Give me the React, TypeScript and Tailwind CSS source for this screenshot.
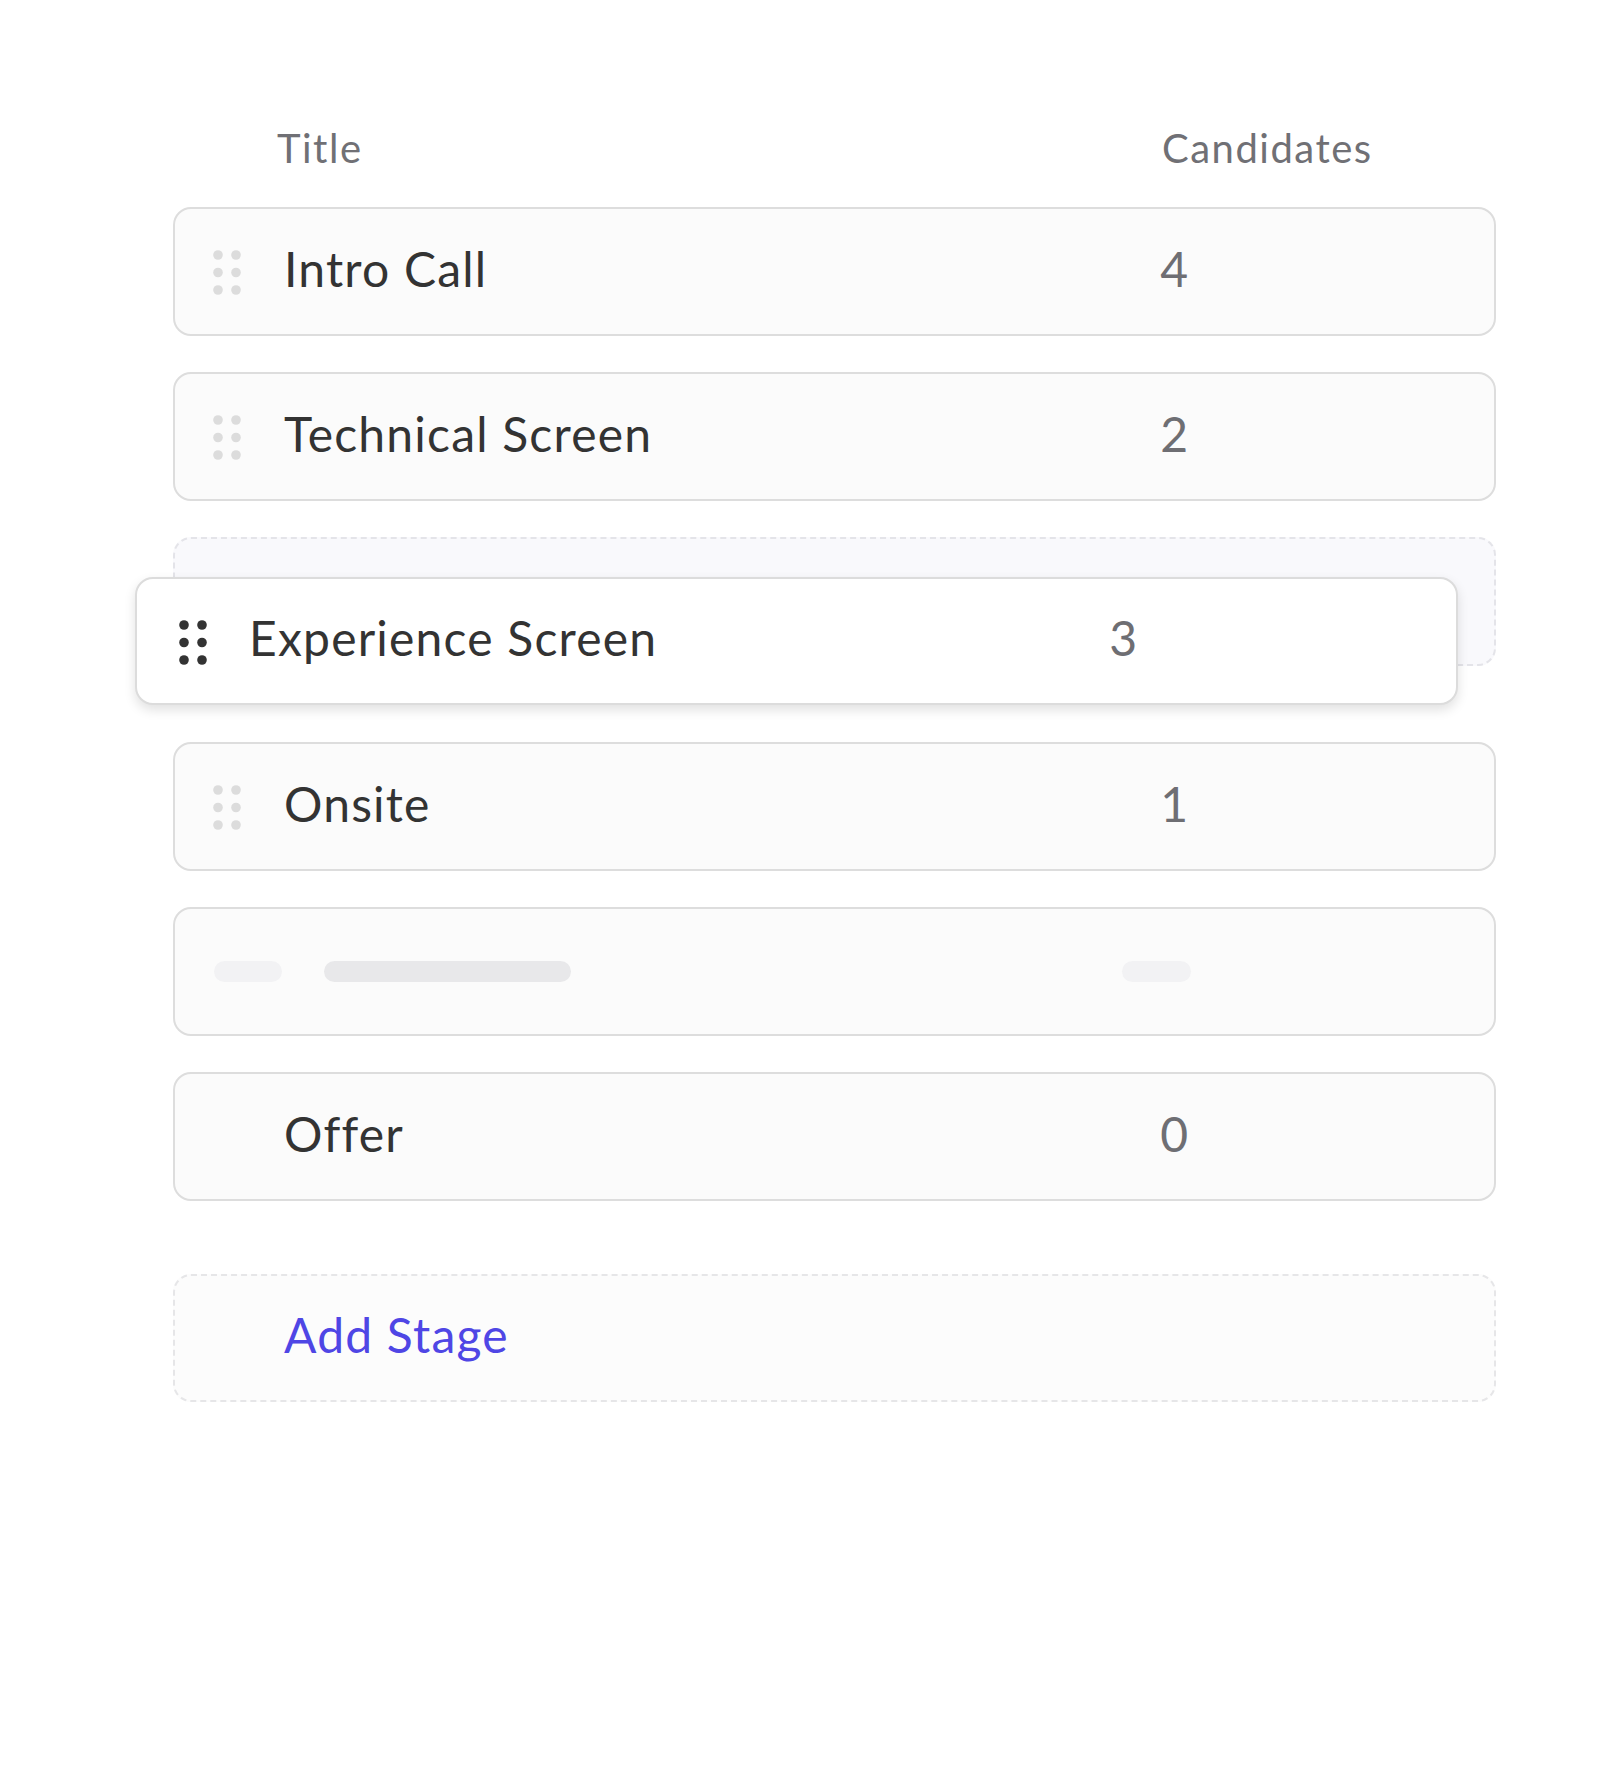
import React from "react";

type Stage = { title: string; count: number; draggable?: boolean };

function DragDots({ color }: { color: string }) {
  return (
    <svg width="28" height="45" viewBox="0 0 28 45" fill={color}>
      <circle cx="5" cy="5" r="4.8" />
      <circle cx="23" cy="5" r="4.8" />
      <circle cx="5" cy="22.5" r="4.8" />
      <circle cx="23" cy="22.5" r="4.8" />
      <circle cx="5" cy="40" r="4.8" />
      <circle cx="23" cy="40" r="4.8" />
    </svg>
  );
}

function StageRow({ stage }: { stage: Stage }) {
  return (
    <div className="grid h-[129px] grid-cols-[109px_804px_100px] items-center rounded-[18px] border-2 border-[#dddddd] bg-[#fbfbfb]">
      <div className="pl-[38px] pt-[2px]">{stage.draggable !== false && <DragDots color="#dcdcdc" />}</div>
      <div className="pb-[6px] text-[48px] tracking-[1.2px] text-[#333333]">{stage.title}</div>
      <div className="pb-[6px] text-right text-[48px] text-[#6e6e73]">{stage.count}</div>
    </div>
  );
}

function SkeletonRow() {
  return (
    <div className="flex h-[129px] items-center rounded-[18px] border-2 border-[#dddddd] bg-[#fbfbfb] pl-[39px]">
      <div className="h-[21px] w-[68px] rounded-full bg-[#f2f2f4]" />
      <div className="ml-[42px] h-[21px] w-[247px] rounded-full bg-[#e8e8ea]" />
      <div className="ml-[551px] h-[21px] w-[69px] rounded-full bg-[#f2f2f4]" />
    </div>
  );
}

function DropSlot() {
  return (
    <div className="relative mb-[40px] h-[129px] rounded-[18px] border-2 border-dashed border-[#e4e4e9] bg-[#f9f9fc]">
      {/* card being dragged, floating over the slot */}
      <div className="absolute left-[-40px] top-[38px] grid h-[128px] w-[1323px] grid-cols-[112px_788px_100px] items-center rounded-[18px] border-2 border-[#dcdcdc] bg-white shadow-[0_5px_12px_rgba(0,0,0,0.12)]">
        <div className="pl-[42px] pt-[2px]">
          <DragDots color="#333333" />
        </div>
        <div className="pb-[6px] text-[48px] tracking-[1.2px] text-[#333333]">Experience Screen</div>
        <div className="pb-[6px] text-right text-[48px] text-[#6e6e73]">3</div>
      </div>
    </div>
  );
}

export default function App() {
  const before: Stage[] = [
    { title: "Intro Call", count: 4 },
    { title: "Technical Screen", count: 2 },
  ];

  return (
    <div className="min-h-[1773px] bg-white pt-[125px] font-['Lato',sans-serif]">
      <div className="ml-[173px] w-[1323px]">
        <div className="grid h-[47px] grid-cols-[989px_1fr] text-[40px] leading-[47px] tracking-[1.5px] text-[#707075]">
          <div className="pl-[104px]">Title</div>
          <div>Candidates</div>
        </div>

        <div className="mt-[35px] flex flex-col gap-[36px]">
          {before.map((s) => (
            <StageRow key={s.title} stage={s} />
          ))}
          <DropSlot />
          <StageRow stage={{ title: "Onsite", count: 1 }} />
          <SkeletonRow />
          <StageRow stage={{ title: "Offer", count: 0, draggable: false }} />
        </div>

        <button className="mt-[73px] flex h-[128px] w-full items-center rounded-[18px] border-2 border-dashed border-[#e6e6e8] bg-[#fcfcfc] pb-[6px] pl-[109px] text-left text-[48px] tracking-[1.2px] text-[#4f46e5]">
          Add Stage
        </button>
      </div>
    </div>
  );
}
